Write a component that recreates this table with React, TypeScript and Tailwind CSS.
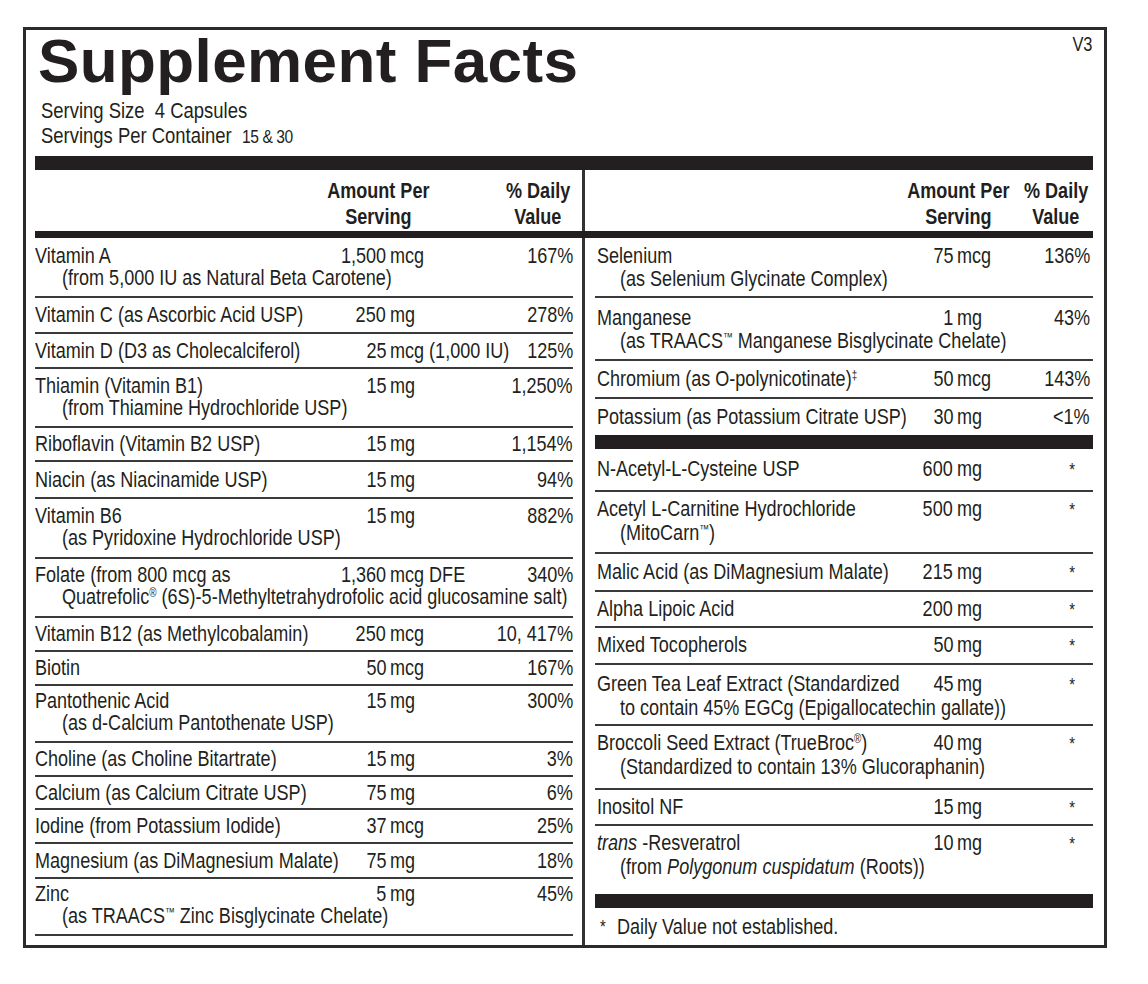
import React from "react";

type Row = {
  name: React.ReactNode;
  sub?: React.ReactNode;
  num: string;
  unit: string;
  dv: string;
  h: string;
  pt?: string;
  sep?: boolean;
};

/* Condensed text: the narrow face is drawn by scaling the regular face horizontally */
function N({
  children,
  o = "origin-left",
  className = "",
}: {
  children: React.ReactNode;
  o?: string;
  className?: string;
}) {
  return <span className={`inline-block whitespace-nowrap scale-x-[0.82] ${o} ${className}`}>{children}</span>;
}

const Sup = ({ children }: { children: React.ReactNode }) => (
  <sup className="text-[12px] top-[-0.6em]">{children}</sup>
);

const leftRows: Row[] = [
  { name: "Vitamin A", sub: "(from 5,000 IU as Natural Beta Carotene)", num: "1,500", unit: "mcg", dv: "167%", h: "h-[58px]", pt: "pt-[7px]" },
  { name: "Vitamin C (as Ascorbic Acid USP)", num: "250", unit: "mg", dv: "278%", h: "h-[34px]" },
  { name: "Vitamin D (D3 as Cholecalciferol)", num: "25", unit: "mcg (1,000 IU)", dv: "125%", h: "h-[33px]" },
  { name: "Thiamin (Vitamin B1)", sub: "(from Thiamine Hydrochloride USP)", num: "15", unit: "mg", dv: "1,250%", h: "h-[57px]", pt: "pt-[6px]" },
  { name: "Riboflavin (Vitamin B2 USP)", num: "15", unit: "mg", dv: "1,154%", h: "h-[32px]" },
  { name: "Niacin (as Niacinamide USP)", num: "15", unit: "mg", dv: "94%", h: "h-[35px]" },
  { name: "Vitamin B6", sub: "(as Pyridoxine Hydrochloride USP)", num: "15", unit: "mg", dv: "882%", h: "h-[58px]", pt: "pt-[6px]" },
  {
    name: "Folate (from 800 mcg as",
    sub: (
      <>
        Quatrefolic<Sup>®</Sup> (6S)-5-Methyltetrahydrofolic acid glucosamine salt)
      </>
    ),
    num: "1,360",
    unit: "mcg DFE",
    dv: "340%",
    h: "h-[57px]",
    pt: "pt-[5px]",
  },
  { name: "Vitamin B12 (as Methylcobalamin)", num: "250", unit: "mcg", dv: "10, 417%", h: "h-[32px]" },
  { name: "Biotin", num: "50", unit: "mcg", dv: "167%", h: "h-[32px]" },
  { name: "Pantothenic Acid", sub: "(as d-Calcium Pantothenate USP)", num: "15", unit: "mg", dv: "300%", h: "h-[55px]", pt: "pt-[4px]" },
  { name: "Choline (as Choline Bitartrate)", num: "15", unit: "mg", dv: "3%", h: "h-[32px]" },
  { name: "Calcium (as Calcium Citrate USP)", num: "75", unit: "mg", dv: "6%", h: "h-[31px]" },
  { name: "Iodine (from Potassium Iodide)", num: "37", unit: "mcg", dv: "25%", h: "h-[32px]" },
  { name: "Magnesium (as DiMagnesium Malate)", num: "75", unit: "mg", dv: "18%", h: "h-[33px]" },
  {
    name: "Zinc",
    sub: (
      <>
        (as TRAACS<Sup>™</Sup> Zinc Bisglycinate Chelate)
      </>
    ),
    num: "5",
    unit: "mg",
    dv: "45%",
    h: "h-[55px]",
    pt: "pt-[4px]",
  },
];

const rightRowsA: Row[] = [
  { name: "Selenium", sub: "(as Selenium Glycinate Complex)", num: "75", unit: "mcg", dv: "136%", h: "h-[58px]", pt: "pt-[7px]" },
  {
    name: "Manganese",
    sub: (
      <>
        (as TRAACS<Sup>™</Sup> Manganese Bisglycinate Chelate)
      </>
    ),
    num: "1",
    unit: "mg",
    dv: "43%",
    h: "h-[61px]",
    pt: "pt-[9px]",
  },
  {
    name: (
      <>
        Chromium (as O-polynicotinate)<Sup>‡</Sup>
      </>
    ),
    num: "50",
    unit: "mcg",
    dv: "143%",
    h: "h-[36px]",
  },
  { name: "Potassium (as Potassium Citrate USP)", num: "30", unit: "mg", dv: "<1%", h: "h-[36px]", sep: false },
];

const rightRowsB: Row[] = [
  { name: "N-Acetyl-L-Cysteine USP", num: "600", unit: "mg", dv: "*", h: "h-[41px]" },
  {
    name: "Acetyl L-Carnitine Hydrochloride",
    sub: (
      <>
        (MitoCarn<Sup>™</Sup>)
      </>
    ),
    num: "500",
    unit: "mg",
    dv: "*",
    h: "h-[60px]",
    pt: "pt-[6px]",
  },
  { name: "Malic Acid (as DiMagnesium Malate)", num: "215", unit: "mg", dv: "*", h: "h-[36px]" },
  { name: "Alpha Lipoic Acid", num: "200", unit: "mg", dv: "*", h: "h-[34px]" },
  { name: "Mixed Tocopherols", num: "50", unit: "mg", dv: "*", h: "h-[35px]" },
  {
    name: "Green Tea Leaf Extract (Standardized",
    sub: "to contain 45% EGCg (Epigallocatechin gallate))",
    num: "45",
    unit: "mg",
    dv: "*",
    h: "h-[59px]",
    pt: "pt-[8px]",
  },
  {
    name: (
      <>
        Broccoli Seed Extract (TrueBroc<Sup>®</Sup>)
      </>
    ),
    sub: "(Standardized to contain 13% Glucoraphanin)",
    num: "40",
    unit: "mg",
    dv: "*",
    h: "h-[62px]",
    pt: "pt-[6px]",
  },
  { name: "Inositol NF", num: "15", unit: "mg", dv: "*", h: "h-[34px]" },
  {
    name: (
      <>
        <i>trans</i> -Resveratrol
      </>
    ),
    sub: (
      <>
        (from <i>Polygonum cuspidatum</i> (Roots))
      </>
    ),
    num: "10",
    unit: "mg",
    dv: "*",
    h: "h-[68px]",
    pt: "pt-[6px]",
    sep: false,
  },
];

function Sep() {
  return <div className="h-[2px] bg-[#3a3a3a]" />;
}

function Bar() {
  return <div className="h-[14px] bg-[#231f20]" />;
}

function DataRow({ r, side }: { r: Row; side: "left" | "right" }) {
  const isLeft = side === "left";
  const star = r.dv === "*";
  return (
    <>
      <div className={`${r.h} ${r.sub ? `${r.pt} flex flex-col` : "flex items-center"} ${isLeft ? "" : "pl-[2px] pr-[3px]"}`}>
        <div
          className={`grid w-full leading-[22px] ${
            isLeft ? "grid-cols-[291px_60px_minmax(0,1fr)_auto]" : "grid-cols-[296px_60px_minmax(0,1fr)_auto]"
          }`}
        >
          <div>
            <N>{r.name}</N>
          </div>
          <div className="text-right">
            <N o="origin-right">{r.num}</N>
          </div>
          <div className="pl-[4px]">
            <N>{r.unit}</N>
          </div>
          <div className="text-right">
            {star ? (
              <N o="origin-right" className="mr-[15px] text-[18px]">
                *
              </N>
            ) : (
              <N o="origin-right">{r.dv}</N>
            )}
          </div>
        </div>
        {r.sub && (
          <div className={isLeft ? "pl-[27px] leading-[22px]" : "pl-[23px] leading-[24px]"}>
            <N>{r.sub}</N>
          </div>
        )}
      </div>
      {r.sep !== false && <Sep />}
    </>
  );
}

function Divider() {
  return (
    <div className="w-[22px] flex shrink-0">
      <div className="ml-[9px] w-[3px] bg-[#333333]" />
    </div>
  );
}

function HeadBlock({ a, b, w }: { a: string; b: string; w: string }) {
  return (
    <div className={`flex flex-col items-center ${w}`}>
      <N o="origin-center">{a}</N>
      <N o="origin-center">{b}</N>
    </div>
  );
}

export default function App() {
  return (
    <div className="w-[1148px] h-[984px] bg-white pt-[27px] pl-[23px] text-[#231f20] font-['Liberation_Sans',Arial,sans-serif] text-[22px]">
      <div className="w-[1084px] h-[921px] border-[3px] border-[#2b2b2b] pl-[9px] pr-[11px] flex flex-col">
        {/* Title */}
        <div className="flex justify-between items-start">
          <h1 className="ml-[3px] font-bold text-[62px] leading-[62px] tracking-[0.4px]">Supplement Facts</h1>
          <div className="mt-[4px] mr-[1px] text-[20px] leading-[20px]">
            <N o="origin-right">V3</N>
          </div>
        </div>
        <div className="mt-[6px] ml-[6px] text-[22.5px] leading-[25px]">
          <div>
            <N>Serving Size&nbsp; 4 Capsules</N>
          </div>
          <div>
            <N>
              Servings Per Container&nbsp; <span className="text-[19px] tracking-[-0.5px]">15 &amp; 30</span>
            </N>
          </div>
        </div>
        <div className="mt-[7px]">
          <Bar />
        </div>
        {/* Column header */}
        <div className="flex h-[61px] font-bold leading-[26px]">
          <div className="w-[538px] flex pt-[8px]">
            <div className="ml-[283px]">
              <HeadBlock a="Amount Per" b="Serving" w="w-[120px]" />
            </div>
            <div className="ml-[67px]">
              <HeadBlock a="% Daily" b="Value" w="w-[66px]" />
            </div>
          </div>
          <Divider />
          <div className="w-[498px] flex pt-[8px]">
            <div className="ml-[303px]">
              <HeadBlock a="Amount Per" b="Serving" w="w-[120px]" />
            </div>
            <div className="ml-[5px]">
              <HeadBlock a="% Daily" b="Value" w="w-[66px]" />
            </div>
          </div>
        </div>
        <div className="h-[7px] bg-[#231f20]" />
        {/* Body */}
        <div className="flex flex-1">
          <div className="w-[538px] flex flex-col">
            {leftRows.map((r, i) => (
              <DataRow key={i} r={r} side="left" />
            ))}
          </div>
          <Divider />
          <div className="w-[498px] flex flex-col">
            {rightRowsA.map((r, i) => (
              <DataRow key={i} r={r} side="right" />
            ))}
            <Bar />
            {rightRowsB.map((r, i) => (
              <DataRow key={i} r={r} side="right" />
            ))}
            <Bar />
            <div className="flex-1 flex items-center pl-[5px] leading-[22px]">
              <N className="text-[18px]">*</N>
              <span className="ml-[10px]">
                <N>Daily Value not established.</N>
              </span>
            </div>
          </div>
        </div>
      </div>
    </div>
  );
}
